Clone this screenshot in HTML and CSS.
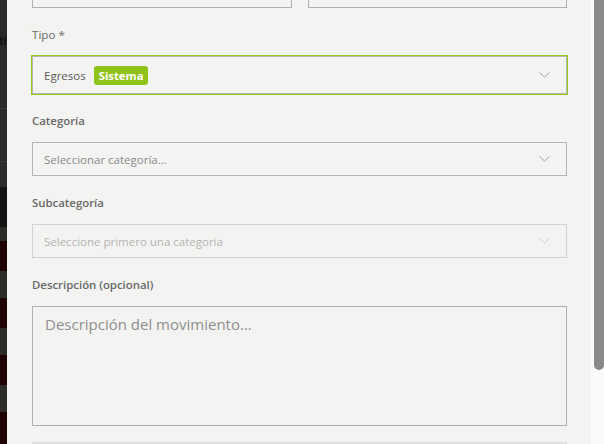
FILE: index.html
```html
<!DOCTYPE html>
<html lang="es">
<head>
<meta charset="utf-8">
<title>Movimiento</title>
<link rel="stylesheet" href="styles.css">
</head>
<body>
<div class="backdrop">
  <div class="bd bd-a"><span class="bd-text">ti</span></div>
  <div class="bd bd-line"></div>
  <div class="bd bd-b"></div>
  <div class="bd bd-line"></div>
  <div class="bd bd-c"></div>
  <div class="bd bd-black"></div>
  <div class="bd bd-g s14"></div>
  <div class="bd bd-r s30"></div>
  <div class="bd bd-g s27"></div>
  <div class="bd bd-r s30"></div>
  <div class="bd bd-g s27"></div>
  <div class="bd bd-r s30"></div>
  <div class="bd bd-g s27"></div>
  <div class="bd bd-r s32"></div>
</div>

<main class="panel">
  <div class="form">
    <div class="row-two">
      <div class="input cut"></div>
      <div class="input cut"></div>
    </div>

    <div class="field">
      <label class="label label-light">Tipo *</label>
      <div class="select select-focus">
        <span class="select-value">Egresos</span>
        <span class="badge">Sistema</span>
        <svg class="chev" width="11" height="6" viewBox="0 0 11 6"><path d="M0.5 0.5 L5.5 5 L10.5 0.5" fill="none" stroke="#a3a3a3" stroke-width="1"/></svg>
      </div>
    </div>

    <div class="field">
      <label class="label">Categoría</label>
      <div class="select">
        <span class="placeholder">Seleccionar categoría...</span>
        <svg class="chev" width="11" height="6" viewBox="0 0 11 6"><path d="M0.5 0.5 L5.5 5 L10.5 0.5" fill="none" stroke="#a3a3a3" stroke-width="1"/></svg>
      </div>
    </div>

    <div class="field">
      <label class="label">Subcategoría</label>
      <div class="select select-disabled">
        <span class="placeholder placeholder-disabled">Seleccione primero una categoría</span>
        <svg class="chev" width="11" height="6" viewBox="0 0 11 6"><path d="M0.5 0.5 L5.5 5 L10.5 0.5" fill="none" stroke="#cfcfcf" stroke-width="1"/></svg>
      </div>
    </div>

    <div class="field">
      <label class="label">Descripción (opcional)</label>
      <div class="textarea"><span class="ta-placeholder">Descripción del movimiento...</span></div>
    </div>

    <div class="divider"></div>
  </div>
</main>

<div class="scrollbar"><div class="thumb"></div></div>
</body>
</html>
```

FILE: styles.css
```css
* { box-sizing: border-box; }

html, body {
  margin: 0;
  height: 444px;
  overflow: hidden;
}

body {
  display: flex;
  font-family: "Open Sans", "Noto Sans", sans-serif;
  background: #f3f3f1;
}

/* dimmed page behind the drawer */
.backdrop {
  width: 7px;
  flex: none;
  display: flex;
  flex-direction: column;
  overflow: hidden;
}
.bd { flex: none; }
.bd-a { height: 108px; background: #2b2b29; padding-top: 34px; }
.bd-text {
  display: block;
  margin-left: -1px;
  font-family: "Liberation Sans", sans-serif;
  font-weight: 700;
  font-size: 13px;
  line-height: 14px;
  color: #141414;
  white-space: nowrap;
}
.bd-line { height: 1px; background: #373735; }
.bd-b { height: 52px; background: #2b2b29; }
.bd-c { height: 25px; background: #2b2b29; }
.bd-black { height: 40px; background: #131313; }
.bd-g { background: #2c2c29; }
.bd-r { background: #1f0303; }
.s14 { height: 14px; }
.s27 { height: 27px; }
.s30 { height: 30px; }
.s32 { height: 32px; }

/* drawer */
.panel {
  flex: 1;
  background: #f3f3f1;
  padding: 0 24px 0 25px;
  overflow: hidden;
}

.form {
  display: flex;
  flex-direction: column;
  gap: 19px;
}

.row-two {
  display: grid;
  grid-template-columns: 1fr 1fr;
  gap: 16px;
  margin-top: -30px;
}

.input {
  height: 38px;
  border: 1px solid #b0b0b0;
  background: #f3f3f1;
}

.field {
  display: flex;
  flex-direction: column;
}

.label {
  font-size: 11.4px;
  line-height: 16px;
  font-weight: 600;
  color: #686868;
  margin-bottom: 13px;
}
.label-light {
  font-size: 11.6px;
  font-weight: 400;
  color: #686868;
}

.select {
  height: 34px;
  border: 1px solid #b3b3b3;
  display: flex;
  align-items: center;
  padding: 0 16px 0 11px;
  font-size: 11.5px;
}
.select-focus {
  height: 38px;
  border-color: #b5b5b5;
  box-shadow: 0 0 0 1px #99c81a;
}
.select-disabled {
  border-color: #d2d2d2;
}

.select-value {
  color: #5a5a5a;
  margin-right: 8px;
}

.badge {
  background: #8fc31a;
  color: #ffffff;
  font-weight: 700;
  font-size: 11.3px;
  line-height: 19px;
  height: 19px;
  padding: 0 5px;
  border-radius: 3px;
}

.placeholder {
  color: #8a8a8a;
}
.placeholder-disabled {
  color: #b4b4b4;
}

.chev {
  margin-left: auto;
  display: block;
}

.textarea {
  height: 120px;
  border: 1px solid #b0b0b0;
  padding: 6px 12px;
}
.ta-placeholder {
  font-size: 15px;
  line-height: 20px;
  color: #8f8f8f;
}

.divider {
  height: 2px;
  background: #e0e0de;
  margin-top: -3px;
}

/* scrollbar of the drawer */
.scrollbar {
  width: 13px;
  flex: none;
  background: #fafafa;
  padding-left: 3px;
}
.thumb {
  height: 370px;
  background: #898989;
  border-radius: 0 0 5px 5px;
}
```
